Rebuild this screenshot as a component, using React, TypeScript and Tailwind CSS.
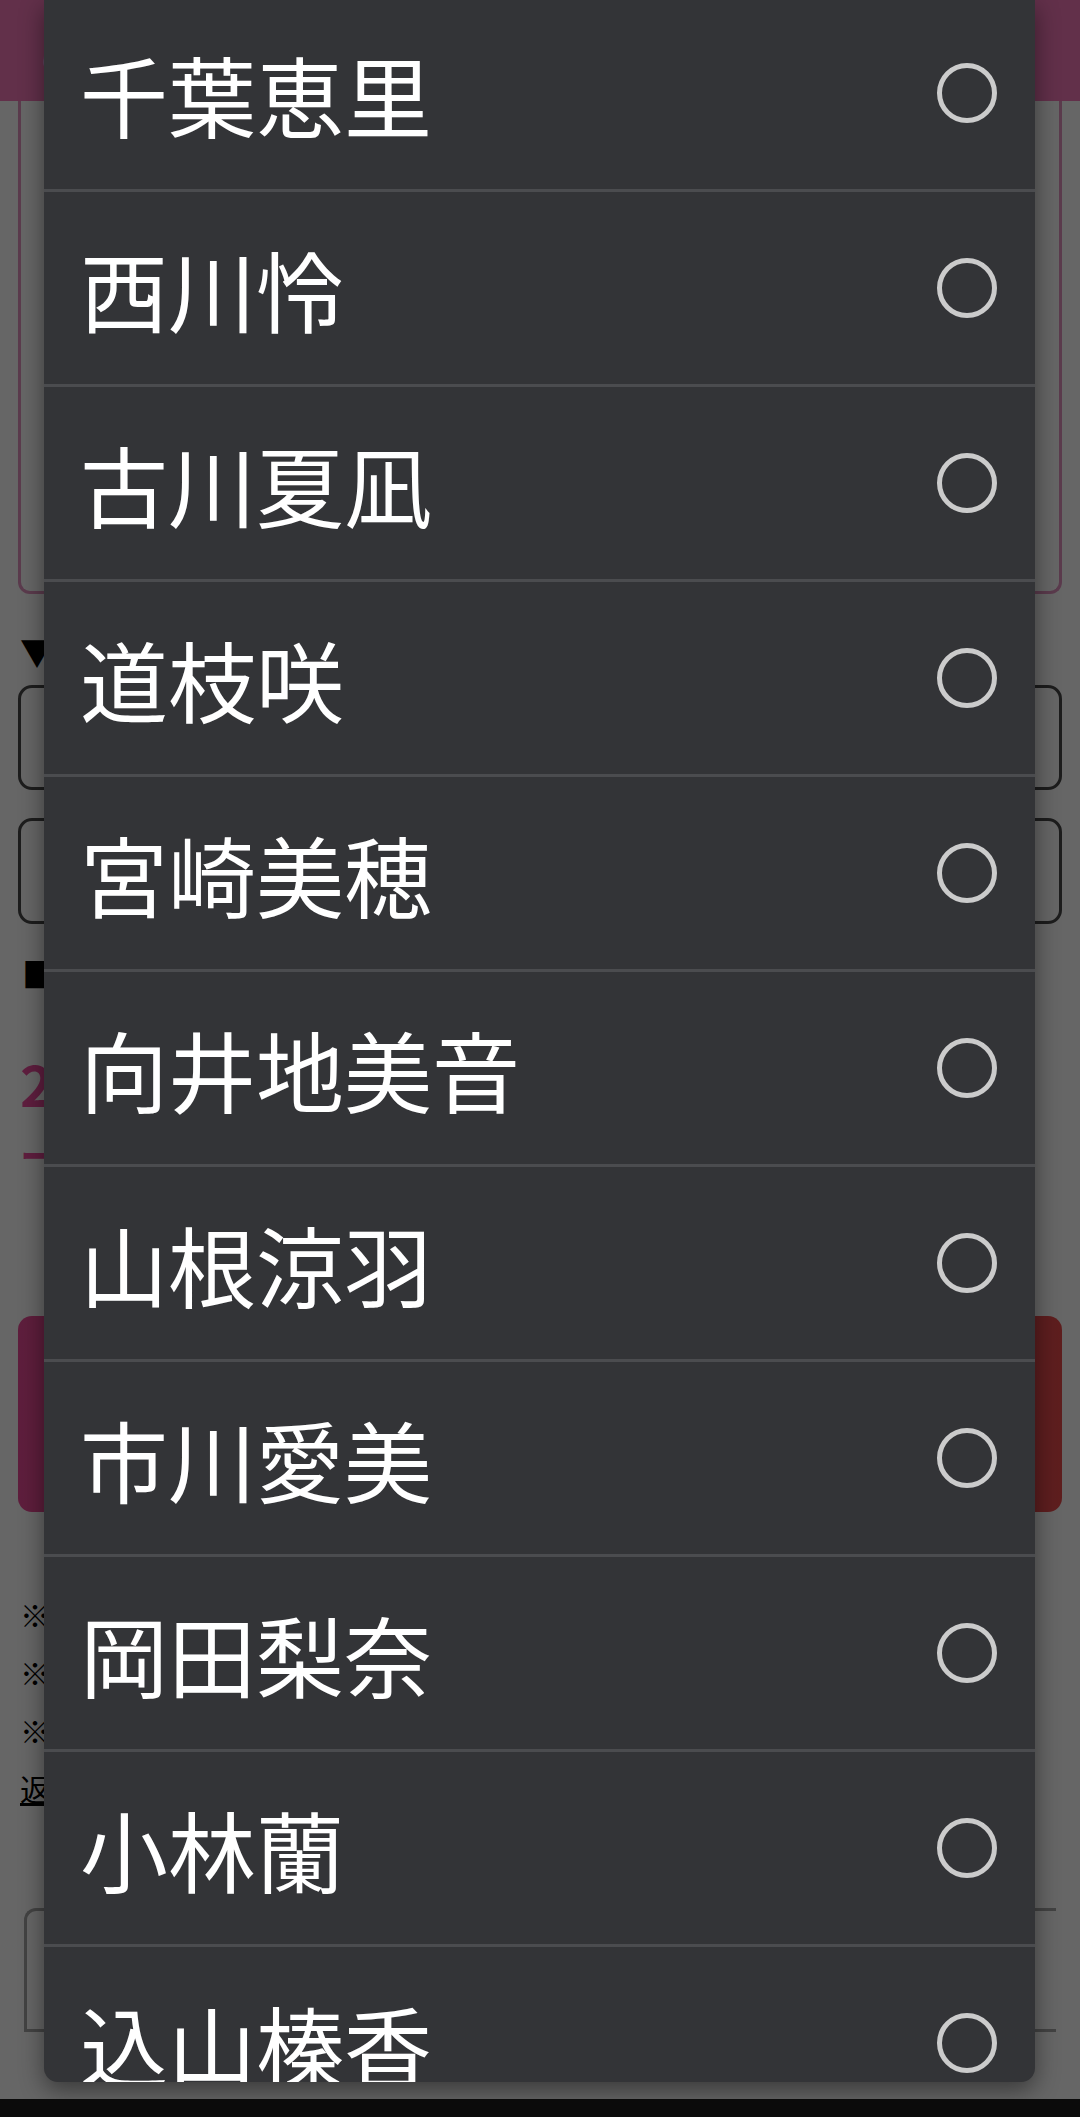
import React from 'react'

const members = [
  '千葉恵里',
  '西川怜',
  '古川夏凪',
  '道枝咲',
  '宮崎美穂',
  '向井地美音',
  '山根涼羽',
  '市川愛美',
  '岡田梨奈',
  '小林蘭',
  '込山榛香',
]

const font = { fontFamily: '"Noto Sans CJK JP", "Noto Sans", sans-serif' }

function PageBehind() {
  return (
    <div className="flex flex-col bg-white text-black">
      {/* Header */}
      <div className="h-[101px] bg-[#f578b9] flex items-center px-[38px]">
        <span className="text-white font-bold text-[44px]">ご応募フォーム</span>
      </div>

      {/* Pink bordered info box */}
      <div className="mx-[18px] h-[493px] border-[3px] border-t-0 border-[#e393c1] rounded-b-[12px] px-[22px] pt-[20px] flex flex-col gap-[14px] text-[32px] leading-[44px]">
        <p className="text-[#e8509f] font-bold">（応募に関するご注意）</p>
        <p>・お一人様1回限りの応募となります。</p>
        <p className="text-[#e8509f]">－ 締切は厳守してください</p>
        <p>・当選者の発表は発送をもって代えます。</p>
        <p className="text-[#e8509f] font-bold">■ 重要なお知らせ</p>
        <p>｜詳しくは公式サイトをご確認ください。</p>
        <p>・ご不明点はお問い合わせください。</p>
      </div>

      {/* Selection */}
      <p className="mt-[41px] px-[20px] text-[34px] leading-[34px] font-bold">▼ 推しメンを選択してください</p>
      <div className="mt-[16px] mx-[18px] h-[105px] border-[3px] border-[#4a4a4a] rounded-[14px] flex items-center px-[24px] text-[34px]">
        選択してください
      </div>
      <div className="mt-[28px] mx-[18px] h-[106px] border-[3px] border-[#4a4a4a] rounded-[14px] flex items-center px-[24px] text-[34px]">
        選択してください
      </div>

      <p className="mt-[33px] px-[22px] text-[34px] leading-[34px] font-bold">■ 応募口数</p>
      <p className="mt-[64px] px-[20px] text-[56px] leading-[56px] font-bold text-[#ee4d9f]">2,000円</p>
      <p className="mt-[28px] px-[20px] text-[40px] leading-[30px] font-bold text-[#ee4d9f]">ー 1口</p>

      {/* Submit button */}
      <div className="mt-[147px] mx-[18px] h-[196px] rounded-[14px] bg-gradient-to-r from-[#ec4b98] to-[#eb4d4d] flex items-center justify-center text-white text-[48px] font-bold">
        応募する
      </div>

      {/* Notes */}
      <div className="mt-[73px] px-[20px] flex flex-col text-[30px] leading-[58px]">
        <p>※ 応募完了後の変更はできません。</p>
        <p>※ 内容をよくご確認ください。</p>
        <p>※ 詳細は規約をご覧ください。</p>
        <p className="underline">返品・キャンセルについて</p>
      </div>

      <div className="mt-[91px] mx-[24px] h-[124px] border-l-[3px] border-t-[3px] border-b-[3px] border-[#a8a8a8] rounded-tl-[12px]" />
    </div>
  )
}

export default function App() {
  return (
    <div className="w-[1080px] h-[2117px] flex flex-col overflow-hidden" style={font}>
      <div className="relative flex-1 overflow-hidden">
        <PageBehind />

        {/* dim overlay */}
        <div className="absolute inset-0 bg-black/60" />

        {/* Picker dialog */}
        <div className="absolute left-[44px] top-0 w-[991px] h-[2082px] bg-[#333437] rounded-b-[14px] overflow-hidden shadow-[0_8px_24px_rgba(0,0,0,0.45)]">
          <ul className="-mt-[3px]">
            {members.map((name) => (
              <li
                key={name}
                className="h-[195px] border-b-[3px] border-[#4b4c4f] flex items-center justify-between pl-[36px] pr-[38px]"
              >
                <span className="text-white text-[88px] leading-none">{name}</span>
                <span className="w-[60px] h-[60px] rounded-full border-[5px] border-[#cbcbcb]" />
              </li>
            ))}
          </ul>
        </div>
      </div>

      {/* system nav bar */}
      <div className="h-[18px] bg-[#0b0b0b]" />
    </div>
  )
}
